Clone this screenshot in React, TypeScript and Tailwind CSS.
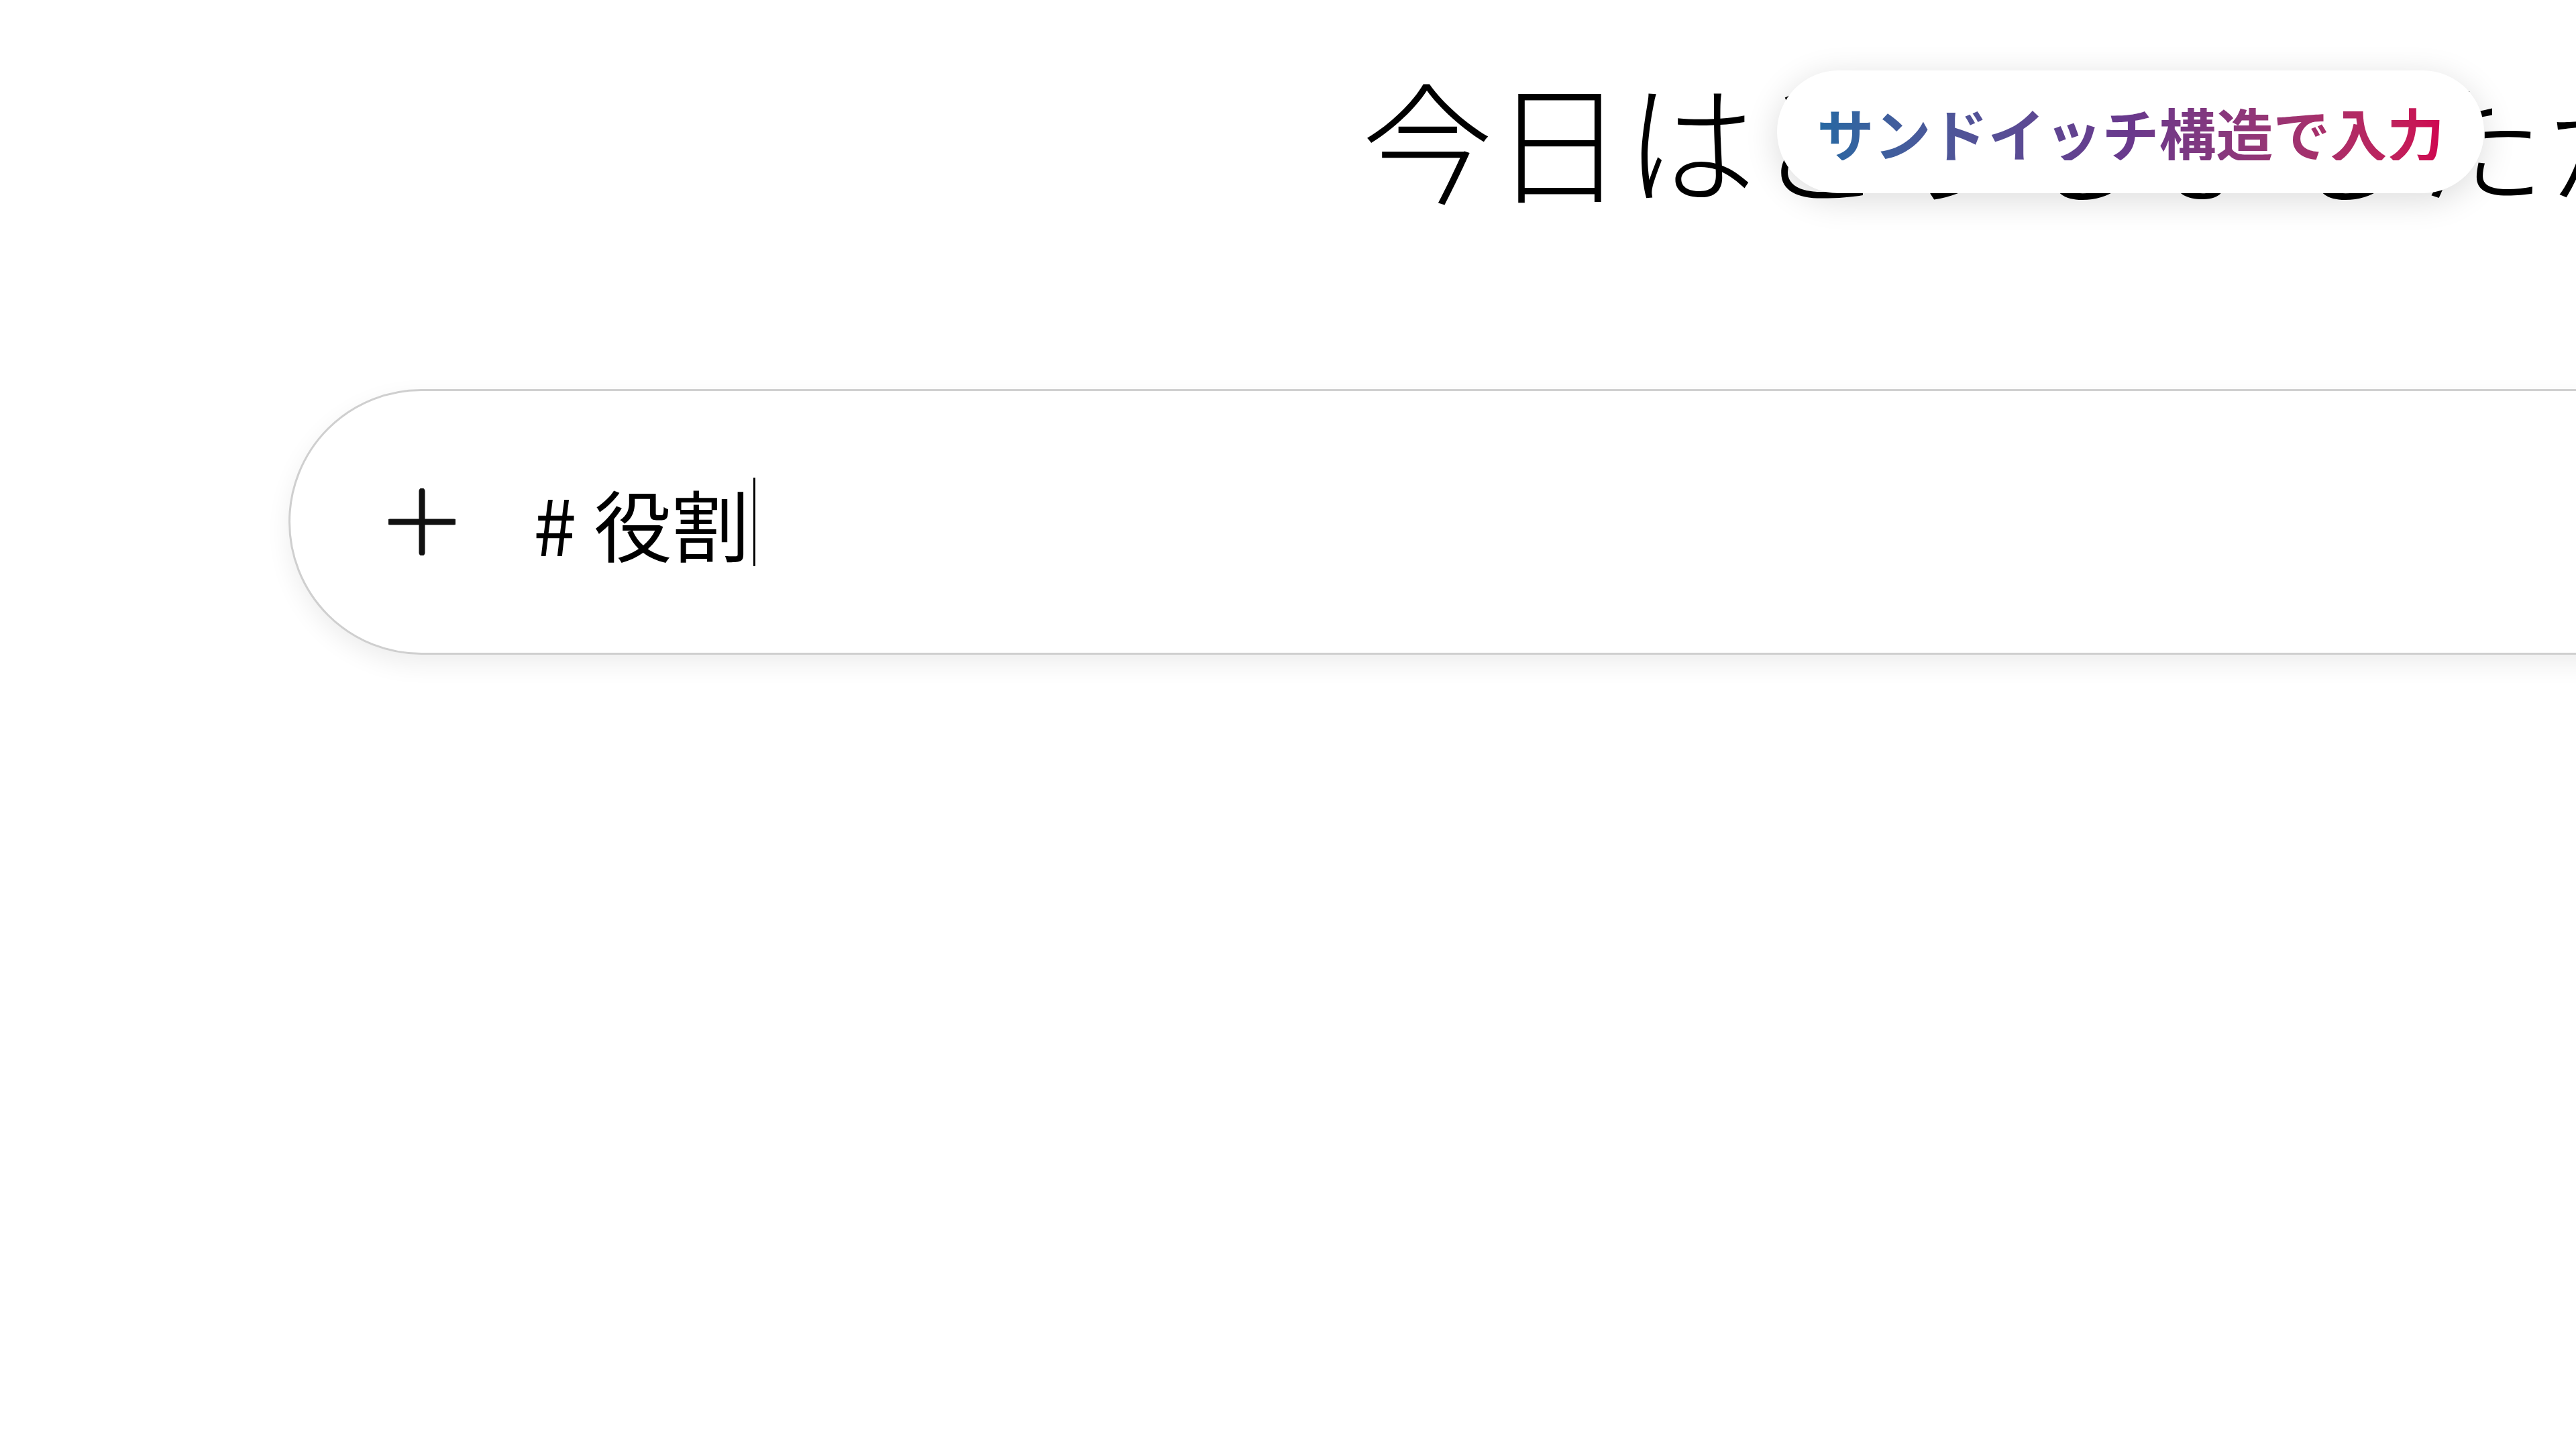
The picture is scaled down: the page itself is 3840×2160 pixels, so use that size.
import React from 'react';

const jp = '"Noto Sans CJK JP", "Noto Sans", sans-serif';

const PlusIcon: React.FC = () => (
  <svg width="100" height="100" viewBox="0 0 100 100" fill="none">
    <path d="M50 4V96M2 50H98" stroke="#111" strokeWidth="9" strokeLinecap="round" />
  </svg>
);

const App: React.FC = () => {
  return (
    <div
      className="relative w-[3840px] h-[2160px] overflow-hidden bg-white text-black"
      style={{ fontFamily: jp }}
    >
      {/* Greeting */}
      <div className="pt-[106px] pl-[2030px] whitespace-nowrap">
        <h1 className="text-[196px] leading-none font-light tracking-normal">今日はどうしましたか？</h1>
      </div>

      {/* Floating label */}
      <div className="absolute left-[2649px] top-[105px] h-[183px] w-[1054px] rounded-full bg-white shadow-[0_10px_50px_rgba(0,0,0,0.14)] flex items-center justify-center">
        <span className="text-[85px] leading-none font-bold whitespace-nowrap bg-linear-to-r from-[#2468a2] via-[#69388c] to-[#d0004f] bg-clip-text text-transparent">
          サンドイッチ構造で入力
        </span>
      </div>

      {/* Composer */}
      <div className="mt-[278px] ml-[430px] w-[3700px] h-[396px] rounded-full border-[3px] border-[#cfcfcf] bg-white shadow-[0_14px_36px_rgba(0,0,0,0.07)] flex items-center pl-[146px]">
        <PlusIcon />
        <div className="ml-[116px] flex items-center">
          <span className="text-[116px] leading-none whitespace-pre">#&nbsp;役割</span>
          <span className="ml-[6px] w-[3px] h-[132px] bg-black" />
        </div>
      </div>
    </div>
  );
};

export default App;
